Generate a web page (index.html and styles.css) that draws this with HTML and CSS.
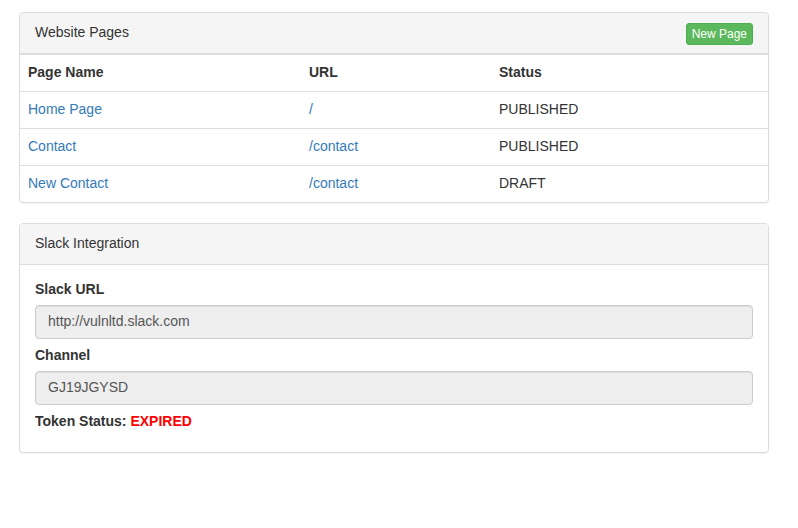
FILE: index.html
```html
<!DOCTYPE html>
<html>
<head>
<meta charset="utf-8">
<link rel="stylesheet" href="styles.css">
</head>
<body>
<div class="wrap">
  <div class="panel">
    <div class="panel-heading heading-row">
      <span class="panel-title">Website Pages</span>
      <a class="btn-new">New Page</a>
    </div>
    <table class="pages">
      <thead>
        <tr><th class="c1">Page Name</th><th class="c2">URL</th><th class="c3">Status</th></tr>
      </thead>
      <tbody>
        <tr><td><a class="link">Home Page</a></td><td><a class="link">/</a></td><td>PUBLISHED</td></tr>
        <tr><td><a class="link">Contact</a></td><td><a class="link">/contact</a></td><td>PUBLISHED</td></tr>
        <tr><td><a class="link">New Contact</a></td><td><a class="link">/contact</a></td><td>DRAFT</td></tr>
      </tbody>
    </table>
  </div>

  <div class="panel">
    <div class="panel-heading">
      <span class="panel-title">Slack Integration</span>
    </div>
    <div class="panel-body">
      <div class="form-group">
        <label class="lbl">Slack URL</label>
        <div class="input">http://vulnltd.slack.com</div>
      </div>
      <div class="form-group">
        <label class="lbl">Channel</label>
        <div class="input">GJ19JGYSD</div>
      </div>
      <p class="token"><b>Token Status:</b> <span class="expired">EXPIRED</span></p>
    </div>
  </div>
</div>
</body>
</html>
```

FILE: styles.css
```css
* { box-sizing: border-box; }
html, body { margin: 0; padding: 0; background: #fff; }
body {
  font-family: "Liberation Sans", Arial, Helvetica, sans-serif;
  font-size: 14px;
  line-height: 20px;
  color: #333;
}
.wrap {
  width: 750px;
  margin-left: 19px;
  padding-top: 12px;
}
.panel {
  border: 1px solid #ddd;
  border-radius: 4px;
  background: #fff;
  box-shadow: 0 1px 1px rgba(0,0,0,.05);
  margin-bottom: 20px;
  overflow: hidden;
}
.panel-heading {
  background: #f5f5f5;
  border-bottom: 1px solid #ddd;
  height: 41px;
  padding: 9px 15px 11px;
  color: #333;
}
.heading-row {
  display: flex;
  justify-content: space-between;
  align-items: flex-start;
}
.panel-title { font-size: 14px; line-height: 20px; }
.btn-new {
  display: block;
  background: #5cb85c;
  border: 1px solid #4cae4c;
  border-radius: 3px;
  color: #fff;
  font-size: 12px;
  line-height: 18px;
  padding: 1px 5px;
  margin-top: 1px;
}
.pages {
  width: 100%;
  border-collapse: collapse;
  border-spacing: 0;
}
.pages th, .pages td {
  text-align: left;
  padding: 7px 8px 9px;
  line-height: 20px;
  vertical-align: top;
}
.pages th {
  font-weight: bold;
  border-top: 1px solid #ddd;
  border-bottom: 1px solid #ddd;
}
.pages tbody td { border-bottom: 1px solid #ddd; }
.pages tbody tr:last-child td { border-bottom: 0; }
.c1 { width: 281px; }
.c2 { width: 190px; }
.link { color: #337ab7; text-decoration: none; }
.panel-body { padding: 14px 15px 15px; }
.form-group { margin-bottom: 6px; }
.lbl {
  display: block;
  font-weight: bold;
  margin-bottom: 6px;
}
.input {
  height: 34px;
  padding: 5px 12px 7px;
  background: #eee;
  border: 1px solid #ccc;
  border-radius: 4px;
  color: #555;
  box-shadow: inset 0 1px 1px rgba(0,0,0,.075);
}
.token { margin: 0 0 6px 0; }
.expired { color: #f00; font-weight: bold; }
```
